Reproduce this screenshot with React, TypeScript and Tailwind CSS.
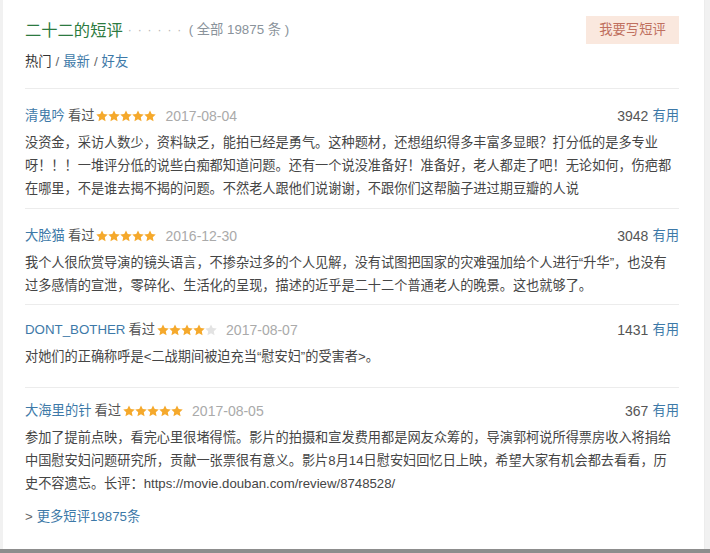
import React from 'react';

const FONT = { fontFamily: '"Liberation Sans", "Noto Sans CJK SC", sans-serif' };

type Review = {
	name: string;
	stars: number;
	date: string;
	votes: string;
	lines: string[];
	pad: string;
};

const REVIEWS: Review[] = [
	{
		name: '清鬼吟',
		stars: 5,
		date: '2017-08-04',
		votes: '3942',
		pad: 'pt-[16px] pb-[8px]',
		lines: [
			'没资金，采访人数少，资料缺乏，能拍已经是勇气。这种题材，还想组织得多丰富多显眼？打分低的是多专业',
			'呀！！！一堆评分低的说些白痴都知道问题。还有一个说没准备好！准备好，老人都走了吧！无论如何，伤疤都',
			'在哪里，不是谁去揭不揭的问题。不然老人跟他们说谢谢，不跟你们这帮脑子进过期豆瓣的人说',
		],
	},
	{
		name: '大脸猫',
		stars: 5,
		date: '2016-12-30',
		votes: '3048',
		pad: 'pt-[16px] pb-[7px]',
		lines: [
			'我个人很欣赏导演的镜头语言，不掺杂过多的个人见解，没有试图把国家的灾难强加给个人进行“升华”，也没有',
			'过多感情的宣泄，零碎化、生活化的呈现，描述的近乎是二十二个普通老人的晚景。这也就够了。',
		],
	},
	{
		name: 'DONT_BOTHER',
		stars: 4,
		date: '2017-08-07',
		votes: '1431',
		pad: 'pt-[14px] pb-[19px]',
		lines: ['对她们的正确称呼是<二战期间被迫充当“慰安妇”的受害者>。'],
	},
	{
		name: '大海里的针',
		stars: 5,
		date: '2017-08-05',
		votes: '367',
		pad: 'pt-[12px] pb-[0px]',
		lines: [
			'参加了提前点映，看完心里很堵得慌。影片的拍摄和宣发费用都是网友众筹的，导演郭柯说所得票房收入将捐给',
			'中国慰安妇问题研究所，贡献一张票很有意义。影片8月14日慰安妇回忆日上映，希望大家有机会都去看看，历',
			'史不容遗忘。长评：https://movie.douban.com/review/8748528/',
		],
	},
];

function Star({ on }: { on: boolean }) {
	return (
		<svg width="12" height="12" viewBox="1.2 1.4 21.6 21" className="shrink-0">
			<path
				d="M12 1.8l3.1 6.6 7.2.9-5.3 5 1.4 7.1L12 17.9l-6.4 3.5 1.4-7.1-5.3-5 7.2-.9z"
				fill={on ? '#f5a92c' : '#e3e3e3'}
			/>
		</svg>
	);
}

function ReviewItem({ r }: { r: Review }) {
	return (
		<div className={`border-t border-[#ececec] ${r.pad}`}>
			<div className="flex h-[22px] items-center justify-between">
				<div className="flex items-center">
					<span className="text-[13.3px] text-[#3d79a8]">{r.name}</span>
					<span className="ml-[3px] text-[13.3px] text-[#555]">看过</span>
					<span className="ml-[2px] flex">
						{[0, 1, 2, 3, 4].map((i) => (
							<Star key={i} on={i < r.stars} />
						))}
					</span>
					<span className="ml-[9px] text-[14px] text-[#aaa]">{r.date}</span>
				</div>
				<div className="flex items-center">
					<span className="text-[14px] text-[#555]">{r.votes}</span>
					<span className="ml-[4px] text-[13.3px] text-[#3d79a8]">有用</span>
				</div>
			</div>
			<div className="mt-[4px] text-[13.2px] leading-[23px] text-[#454545]">
				{r.lines.map((l, i) => (
					<div key={i} className="whitespace-nowrap">
						{l}
					</div>
				))}
			</div>
		</div>
	);
}

export default function App() {
	return (
		<div style={FONT} className="flex h-[553px] w-[710px] flex-col bg-[#f1f1f1]">
			<div className="ml-[3px] mr-[5px] flex-1 border-r border-[#ececec] bg-white pl-[22px] pr-[25px]">
				<div className="flex h-[28px] items-center justify-between mt-[16px]">
					<div className="flex items-center">
						<span className="text-[16.3px] text-[#2c7a40]">二十二的短评</span>
						<span className="ml-[5px] text-[12px] tracking-[1.3px] text-[#b5b5b5]">· · · · · ·</span>
						<span className="ml-[6px] text-[13.3px] text-[#8a939b]">( 全部 19875 条 )</span>
					</div>
					<div className="flex h-[28px] w-[93px] items-center justify-center bg-[#fae8de] text-[13.3px] text-[#c0705f]">
						我要写短评
					</div>
				</div>
				<div className="mt-[8px] flex h-[20px] items-center text-[13.3px]">
					<span className="text-[#333]">热门</span>
					<span className="mx-[4px] text-[#666]">/</span>
					<span className="text-[#3d79a8]">最新</span>
					<span className="mx-[4px] text-[#666]">/</span>
					<span className="text-[#3d79a8]">好友</span>
				</div>
				<div className="mt-[16px]">
					{REVIEWS.map((r) => (
						<ReviewItem key={r.name} r={r} />
					))}
				</div>
				<div className="mt-[12px] flex h-[20px] items-center text-[13.3px]">
					<span className="text-[#666]">&gt;</span>
					<span className="ml-[4px] text-[#3d79a8]">更多短评19875条</span>
				</div>
			</div>
			<div className="h-[4px] bg-[#8d8d8d]" />
		</div>
	);
}
